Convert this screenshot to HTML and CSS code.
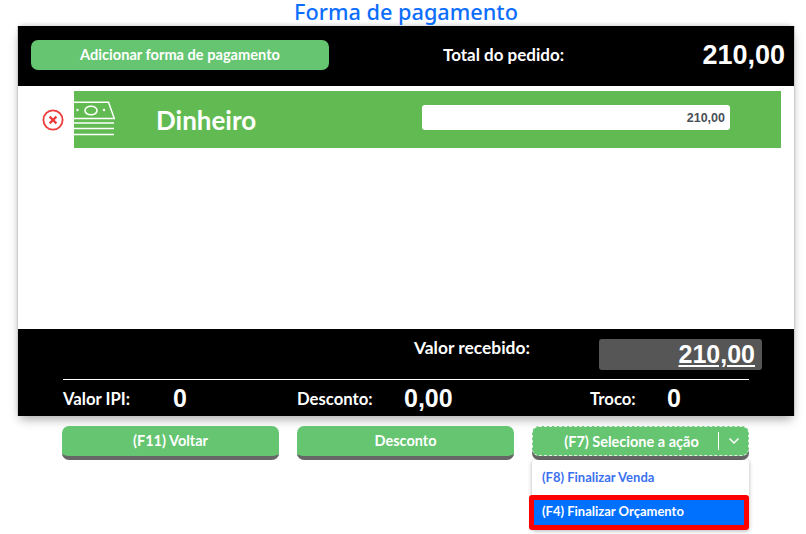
FILE: index.html
```html
<!DOCTYPE html>
<html>
<head lang="pt">
    <meta charset="UTF-8">
    <title>Forma de pagamento</title>
    <link rel="stylesheet" href="styles.css">
</head>
<body>

<h1 class="title">Forma de pagamento</h1>

<div class="panel">
    <div class="top">
        <button class="add">Adicionar forma de pagamento</button>
        <span class="total-label">Total do pedido:</span>
        <span class="total-value">210,00</span>
    </div>

    <div class="list">
        <div class="line">
            <svg class="remove" width="22" height="22" viewBox="0 0 22 22">
                <circle cx="11" cy="11" r="9.6" fill="none" stroke="#ee3a3a" stroke-width="1.8"/>
                <path d="M7.6 7.6l6.8 6.8M14.4 7.6l-6.8 6.8" fill="none" stroke="#ee3a3a" stroke-width="2.2"/>
            </svg>
            <div class="method">
                <svg class="money" width="41" height="35" viewBox="0 0 41 35">
                    <path d="M0 1.2H34.5L40.3 17.5H0" fill="none" stroke="#fff" stroke-width="1.5"/>
                    <ellipse cx="17" cy="9.5" rx="6" ry="4.3" fill="none" stroke="#fff" stroke-width="1.6"/>
                    <circle cx="3.5" cy="9" r="1.2" fill="#fff"/>
                    <circle cx="30" cy="9" r="1.2" fill="#fff"/>
                    <path d="M0 22H40M0 27.5H40M0 33.5H40" fill="none" stroke="#fff" stroke-width="1.7"/>
                </svg>
                <span class="method-name">Dinheiro</span>
                <input class="method-value" type="text" value="210,00">
            </div>
        </div>
    </div>

    <div class="bottom">
        <div class="received">
            <span class="received-label">Valor recebido:</span>
            <span class="received-box">210,00</span>
        </div>
        <div class="summary">
            <div class="sum-item">
                <span class="sum-label">Valor IPI:</span>
                <span class="sum-value">0</span>
            </div>
            <div class="sum-item">
                <span class="sum-label">Desconto:</span>
                <span class="sum-value">0,00</span>
            </div>
            <div class="sum-item sum-troco">
                <span class="sum-label">Troco:</span>
                <span class="sum-value">0</span>
            </div>
        </div>
    </div>
</div>

<div class="actions">
    <button class="act">(F11) Voltar</button>
    <button class="act">Desconto</button>
    <div class="act-wrap">
        <button class="act act-select">
            <span class="act-text">(F7) Selecione a ação</span>
            <span class="act-arrow">
                <svg width="12" height="8" viewBox="0 0 12 8">
                    <path d="M1.5 1.5L6 6L10.5 1.5" fill="none" stroke="#fff" stroke-width="1.5"/>
                </svg>
            </span>
        </button>
        <div class="menu">
            <div class="menu-item">(F8) Finalizar Venda</div>
            <div class="menu-item menu-active">(F4) Finalizar Orçamento</div>
        </div>
    </div>
</div>

</body>
</html>
```

FILE: styles.css
```css
*{
    margin: 0px;
    padding: 0px;
    box-sizing: border-box;
}
html,body{
    min-height: 534px;
}
body{
    background-color: #ffffff;
    font-family: "Lato", "Liberation Sans", sans-serif;
}
button{
    font-family: inherit;
    border: none;
    color: #ffffff;
    background-color: #65c571;
}
.title{
    height: 26px;
    line-height: 24px;
    padding-left: 6px;
    text-align: center;
    font-family: "Noto Sans", sans-serif;
    font-size: 21.7px;
    font-weight: 500;
    color: #0d6efd;
}
.panel{
    width: 778px;
    height: 390px;
    margin-left: 17px;
    border-left: 1px solid #cccccc;
    border-right: 1px solid #cccccc;
    box-shadow: 0px 6px 10px -3px rgba(0, 0, 0, 0.35), 0px -3px 5px -3px rgba(0, 0, 0, 0.25);
    display: flex;
    flex-direction: column;
    background-color: #ffffff;
}
.top{
    height: 60px;
    background-color: #000000;
    color: #ffffff;
    display: flex;
    align-items: center;
    padding: 0px 9px 2px 13px;
}
.add{
    width: 298px;
    height: 30px;
    padding-bottom: 2px;
    border-radius: 7px;
    font-size: 14.6px;
    font-weight: 700;
}
.total-label{
    margin-left: 114px;
    margin-top: -2px;
    font-size: 17px;
    font-weight: 700;
}
.total-value{
    margin-left: auto;
    font-family: "Liberation Sans", sans-serif;
    font-size: 27px;
    font-weight: 700;
}
.list{
    flex: 1;
    padding: 5px 13px 0px 24px;
}
.line{
    display: flex;
    align-items: center;
    gap: 10px;
}
.method{
    flex: 1;
    height: 57px;
    background-color: #62bb52;
    display: flex;
    align-items: center;
    position: relative;
}
.money{
    display: block;
    margin-top: -3px;
}
.method-name{
    margin-left: 41px;
    font-size: 26px;
    font-weight: 700;
    color: #ffffff;
}
.method-value{
    position: absolute;
    left: 348px;
    top: 14px;
    width: 308px;
    height: 25px;
    border: none;
    border-radius: 3px;
    text-align: right;
    padding-right: 5px;
    font-family: "Liberation Sans", sans-serif;
    font-size: 12.5px;
    font-weight: 700;
    color: #495057;
}
.bottom{
    height: 87px;
    background-color: #000000;
    color: #ffffff;
    padding: 10px 45px 0px 45px;
}
.received{
    height: 41px;
    display: flex;
    align-items: flex-start;
    border-bottom: 1px solid #ffffff;
}
.received-label{
    margin-left: 351px;
    margin-top: -2px;
    font-size: 17.4px;
    font-weight: 700;
}
.received-box{
    width: 163px;
    height: 31px;
    margin-left: auto;
    margin-right: -13px;
    padding-right: 7px;
    background-color: #565656;
    border-radius: 3px;
    text-align: right;
    font-family: "Liberation Sans", sans-serif;
    font-size: 25px;
    line-height: 31px;
    font-weight: 700;
    text-decoration: underline;
}
.summary{
    display: grid;
    grid-template-columns: 234px 293px 1fr;
    padding-top: 4px;
}
.sum-item{
    display: flex;
    align-items: center;
}
.sum-label{
    width: 110px;
    font-size: 16.7px;
    font-weight: 700;
}
.sum-value{
    font-family: "Liberation Sans", sans-serif;
    font-size: 25px;
    font-weight: 700;
}
.sum-item:nth-child(2) .sum-label{
    width: 107px;
}
.sum-troco .sum-label{
    width: 77px;
}
.actions{
    display: grid;
    grid-template-columns: repeat(3, 217px);
    gap: 18px;
    padding: 10px 0px 0px 62px;
}
.act{
    display: block;
    height: 34px;
    border-radius: 7px;
    border-bottom: 4px solid #666666;
    padding-bottom: 2px;
    font-size: 14.5px;
    font-weight: 700;
    width: 100%;
}
.act-wrap{
    position: relative;
}
.act-select{
    display: flex;
    align-items: center;
    height: 30px;
    padding-bottom: 0px;
    border: 1px dashed rgba(255, 255, 255, 0.8);
    box-shadow: 0px 4px 0px #666666;
}
.act-text{
    flex: 1;
    padding-left: 12px;
}
.act-arrow{
    width: 30px;
    height: 18px;
    border-left: 1px solid #ffffff;
    display: flex;
    align-items: center;
    justify-content: center;
}
.menu{
    position: absolute;
    left: 0px;
    top: 34px;
    width: 217px;
    z-index: 5;
    background-color: #ffffff;
    box-shadow: 0px 1px 4px rgba(0, 0, 0, 0.3);
    border-radius: 3px;
}
.menu-item{
    height: 35px;
    line-height: 35px;
    padding-left: 10px;
    font-size: 13px;
    font-weight: 700;
    color: #3b71f0;
}
.menu-active{
    margin-left: -3px;
    padding-left: 8px;
    line-height: 23px;
    border: 5px solid #ff0000;
    border-radius: 3px;
    background-color: #0070ff;
    color: #ffffff;
}
```
